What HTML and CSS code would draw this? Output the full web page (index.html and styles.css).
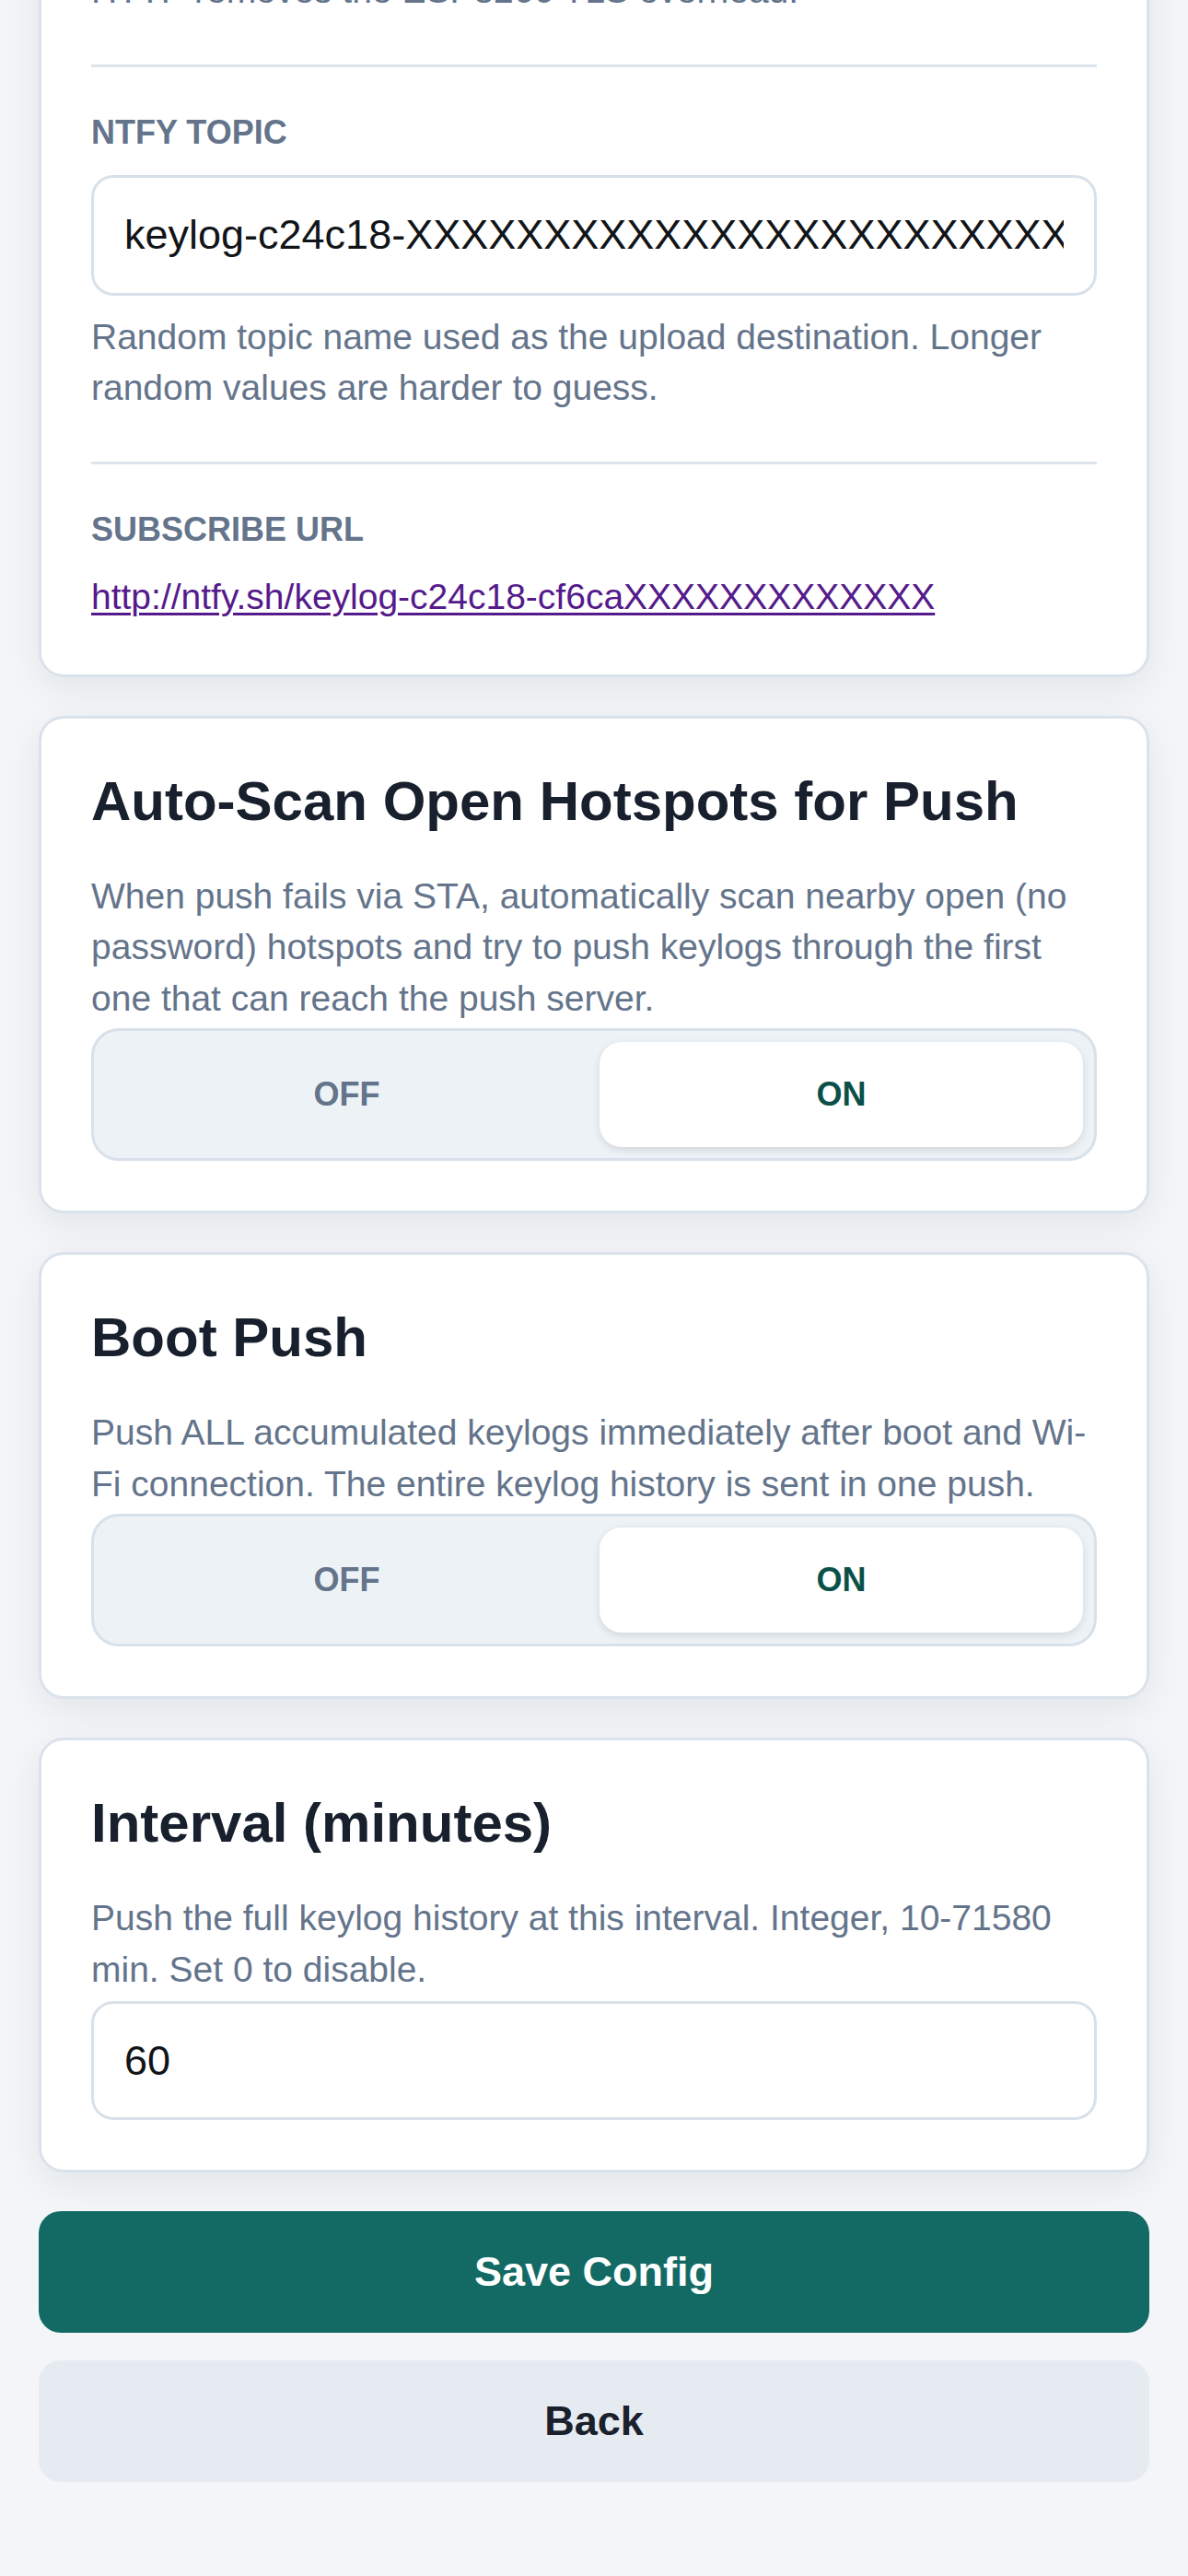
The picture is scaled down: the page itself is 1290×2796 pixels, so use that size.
FILE: index.html
```html
<!DOCTYPE html>
<html lang="en">
<head>
<meta charset="utf-8">
<title>Push Config</title>
<link rel="stylesheet" href="styles.css">
</head>
<body>
<main class="page">
  <section class="card">
    <p class="hint">HTTP removes the ESP8266 TLS overhead.</p>
    <hr class="divider">
    <div class="field-label">NTFY TOPIC</div>
    <input class="text-input" type="text" value="keylog-c24c18-XXXXXXXXXXXXXXXXXXXXXXXXXXXXXXXXXXXXXXXX">
    <p class="hint hint-after">Random topic name used as the upload destination. Longer random values are harder to guess.</p>
    <hr class="divider">
    <div class="field-label">SUBSCRIBE URL</div>
    <div class="link-row"><a class="sub-link" href="#">http://ntfy.sh/keylog-c24c18-cf6caXXXXXXXXXXXXX</a></div>
  </section>

  <section class="card">
    <h2 class="card-title">Auto-Scan Open Hotspots for Push</h2>
    <p class="hint">When push fails via STA, automatically scan nearby open (no password) hotspots and try to push keylogs through the first one that can reach the push server.</p>
    <div class="seg">
      <span class="seg-btn">OFF</span>
      <span class="seg-btn is-on">ON</span>
    </div>
  </section>

  <section class="card">
    <h2 class="card-title">Boot Push</h2>
    <p class="hint">Push ALL accumulated keylogs immediately after boot and Wi-Fi connection. The entire keylog history is sent in one push.</p>
    <div class="seg">
      <span class="seg-btn">OFF</span>
      <span class="seg-btn is-on">ON</span>
    </div>
  </section>

  <section class="card">
    <h2 class="card-title">Interval (minutes)</h2>
    <p class="hint">Push the full keylog history at this interval. Integer, 10-71580 min. Set 0 to disable.</p>
    <input class="text-input input-after" type="text" value="60">
  </section>

  <div class="actions">
    <button class="btn btn-primary" type="button">Save Config</button>
    <button class="btn btn-secondary" type="button">Back</button>
  </div>
</main>
</body>
</html>
```

FILE: styles.css
```css
* {
  box-sizing: border-box;
}

html, body {
  margin: 0;
  padding: 0;
  background: #f3f5f8;
}

body {
  font-family: "Liberation Sans", Arial, sans-serif;
  color: #1a202c;
}

.page {
  margin-top: -95px;
  padding: 0 42px 100px;
  display: flex;
  flex-direction: column;
  gap: 42px;
}

.card {
  background: #ffffff;
  border: 3px solid #dae2eb;
  border-radius: 27px;
  padding: 54px;
  box-shadow: 0 12px 42px rgba(15, 23, 42, 0.07);
}

.card-title {
  margin: 0 0 39px;
  font-size: 60px;
  line-height: 72px;
  font-weight: 700;
  color: #18202d;
}

.hint {
  margin: 0;
  font-size: 39px;
  line-height: 55.5px;
  color: #64748b;
}

.hint-after {
  margin-top: 17px;
}

.divider {
  border: 0;
  height: 3px;
  background: #dde4ec;
  margin: 52px 0 50px;
}

.field-label {
  font-size: 36px;
  line-height: 42px;
  font-weight: 700;
  color: #64748b;
}

.text-input {
  display: block;
  width: 100%;
  height: 131px;
  margin-top: 25px;
  padding: 0 33px;
  border: 3px solid #d8e1ea;
  border-radius: 24px;
  background: #ffffff;
  font-family: "Liberation Sans", Arial, sans-serif;
  font-size: 45px;
  color: #111418;
  outline: none;
}

.input-after {
  margin-top: 7px;
  height: 129px;
}

.link-row {
  margin-top: 21px;
  font-size: 39px;
  line-height: 61px;
}

.sub-link {
  color: #551a8b;
  text-decoration: underline;
  text-decoration-thickness: 3px;
  text-underline-offset: 4px;
}

.seg {
  margin-top: 5px;
  display: grid;
  grid-template-columns: 1fr 1fr;
  gap: 12px;
  padding: 12px;
  background: #edf2f6;
  border: 3px solid #d8e1ea;
  border-radius: 30px;
}

.seg-btn {
  height: 114px;
  display: flex;
  align-items: center;
  justify-content: center;
  font-size: 36px;
  font-weight: 700;
  color: #64748b;
  border-radius: 24px;
}

.seg-btn.is-on {
  background: #ffffff;
  color: #0a5048;
  box-shadow: 0 3px 9px rgba(15, 23, 42, 0.12);
}

.actions {
  display: flex;
  flex-direction: column;
  gap: 30px;
}

.btn {
  display: block;
  width: 100%;
  height: 132px;
  border: 0;
  border-radius: 24px;
  font-family: "Liberation Sans", Arial, sans-serif;
  font-size: 45px;
  font-weight: 700;
  cursor: pointer;
}

.btn-primary {
  background: #136a64;
  color: #ffffff;
}

.btn-secondary {
  background: #e6ebf2;
  color: #1a202c;
}
```
